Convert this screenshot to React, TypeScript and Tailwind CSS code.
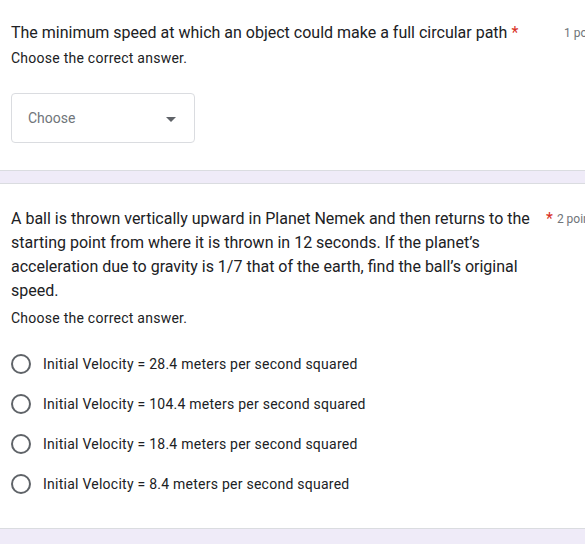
import { ReactNode } from "react";

const options = [
  "Initial Velocity = 28.4 meters per second squared",
  "Initial Velocity = 104.4 meters per second squared",
  "Initial Velocity = 18.4 meters per second squared",
  "Initial Velocity = 8.4 meters per second squared",
];

const Card = ({ children, className }: { children: ReactNode; className?: string }) => (
  <div className={`bg-white ${className ?? ""}`}>{children}</div>
);

export default function App() {
  return (
    <div
      className="w-full overflow-hidden bg-[#efebf8] text-[#202124]"
      style={{ fontFamily: "Roboto, 'Noto Sans', Arial, sans-serif" }}
    >
      {/* Question 1 */}
      <Card className="border-b border-[#dadce0] pl-[11px] pt-[21px] pb-[27px]">
        <div className="flex items-start">
          <div className="w-[553px] shrink-0 text-[16px] leading-[24px]">
            The minimum speed at which an object could make a full circular path{" "}
            <span className="text-[#d93025]">*</span>
          </div>
          <div className="whitespace-nowrap pt-[2px] text-[12px] leading-[20px] text-[#70757a]">1 point</div>
        </div>
        <div className="mt-[3px] text-[14px] leading-[20px] tracking-[0.25px]">Choose the correct answer.</div>
        <div className="mt-[25px] flex h-[50px] w-[184px] items-center justify-between rounded-[4px] border border-[#dadce0] pl-[16px] pr-[18px]">
          <span className="text-[14px] text-[#70757a]">Choose</span>
          <svg width="10" height="5" viewBox="0 0 10 5" className="mt-[2px]">
            <path d="M0 0 L10 0 L5 5 Z" fill="#5f6368" />
          </svg>
        </div>
      </Card>

      <div className="h-[12px]" />

      {/* Question 2 */}
      <Card className="border-y border-[#dadce0] pl-[11px] pt-[23px] pb-[24px]">
        <div className="flex items-start">
          <div className="w-[532px] shrink-0 text-[16px] leading-[24px]">
            A ball is thrown vertically upward in Planet Nemek and then returns to the starting point from
            where it is thrown in 12 seconds. If the planet’s acceleration due to gravity is 1/7 that of the
            earth, find the ball’s original speed.
          </div>
          <span className="ml-[3px] text-[16px] leading-[24px] text-[#d93025]">*</span>
          <div className="ml-[4px] whitespace-nowrap pt-[2px] text-[12px] leading-[20px] text-[#70757a]">2 points</div>
        </div>
        <div className="mt-[5px] text-[14px] leading-[20px] tracking-[0.25px]">Choose the correct answer.</div>
        <div className="mt-[16px] flex flex-col">
          {options.map((o) => (
            <label key={o} className="flex h-[40px] items-center">
              <span className="h-[20px] w-[20px] shrink-0 rounded-full border-2 border-[#5f6368]" />
              <span className="ml-[12px] text-[14px] leading-[20px] tracking-[0.25px]">{o}</span>
            </label>
          ))}
        </div>
      </Card>

      <div className="h-[40px]" />
    </div>
  );
}
